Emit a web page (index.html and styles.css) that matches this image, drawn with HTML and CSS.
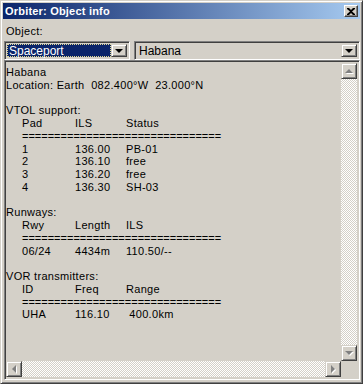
FILE: index.html
```html
<!DOCTYPE html>
<html lang="en">
<head>
    <meta charset="UTF-8">
    <title>Orbiter: Object info</title>
    <link rel="stylesheet" href="styles.css">
</head>
<body>
    <div class="window">
        <div class="title-bar">
            <span class="title-text">Orbiter: Object info</span>
            <button class="close-btn">
                <svg width="8" height="7" viewBox="0 0 8 7"><path d="M0 0h2l2 2 2-2h2v1L5 3.5 8 6v1H6L4 5 2 7H0V6l3-2.5L0 1z" fill="#000"/></svg>
            </button>
        </div>

        <div class="label">Object:</div>

        <div class="combo-row">
            <div class="combo combo-type">
                <div class="combo-value selected"><span>Spaceport</span></div>
                <div class="combo-btn"><span class="arrow-down"></span></div>
            </div>
            <div class="combo combo-name">
                <div class="combo-value">Habana</div>
                <div class="combo-btn"><span class="arrow-down"></span></div>
            </div>
        </div>

        <div class="info-box">
            <div class="info-main">
                <div class="info-text">
                    <div class="line">Habana</div>
                    <div class="line">Location: Earth&nbsp; 082.400°W&nbsp; 23.000°N</div>
                    <div class="line"></div>
                    <div class="line">VTOL support:</div>
                    <div class="row"><span>Pad</span><span>ILS</span><span>Status</span></div>
                    <div class="row rule">===============================</div>
                    <div class="row"><span>1</span><span>136.00</span><span>PB-01</span></div>
                    <div class="row"><span>2</span><span>136.10</span><span>free</span></div>
                    <div class="row"><span>3</span><span>136.20</span><span>free</span></div>
                    <div class="row"><span>4</span><span>136.30</span><span>SH-03</span></div>
                    <div class="line"></div>
                    <div class="line">Runways:</div>
                    <div class="row"><span>Rwy</span><span>Length</span><span>ILS</span></div>
                    <div class="row rule">===============================</div>
                    <div class="row"><span>06/24</span><span>4434m</span><span>110.50/--</span></div>
                    <div class="line"></div>
                    <div class="line">VOR transmitters:</div>
                    <div class="row"><span>ID</span><span>Freq</span><span>Range</span></div>
                    <div class="row rule">===============================</div>
                    <div class="row"><span>UHA</span><span>116.10</span><span>&nbsp;400.0km</span></div>
                </div>
                <div class="vscroll">
                    <div class="sb-btn"><span class="tri tri-up"></span></div>
                    <div class="sb-track"></div>
                    <div class="sb-btn"><span class="tri tri-down"></span></div>
                </div>
            </div>
            <div class="hscroll">
                <div class="sb-btn"><span class="tri tri-left"></span></div>
                <div class="sb-track"></div>
                <div class="sb-btn"><span class="tri tri-right"></span></div>
                <div class="sb-corner"></div>
            </div>
        </div>
    </div>
</body>
</html>
```

FILE: styles.css
```css
body {
    margin: 0;
    padding: 0;
    background: #d4d0c8;
    font-family: 'Liberation Sans', Arial, sans-serif;
    font-size: 11px;
    color: #000;
}

.window {
    width: 363px;
    height: 384px;
    box-sizing: border-box;
    border: 1px solid;
    border-color: #d4d0c8 #404040 #404040 #d4d0c8;
    box-shadow: inset 1px 1px #fff, inset -1px -1px #808080;
    padding: 2px;
    display: flex;
    flex-direction: column;
    background: #d4d0c8;
}

.title-bar {
    height: 16px;
    flex-shrink: 0;
    display: flex;
    align-items: center;
    justify-content: space-between;
    padding: 0 2px 0 2px;
    background: linear-gradient(90deg, #0a246a, #a6caf0);
}

.title-text {
    color: #fff;
    font-weight: bold;
    font-size: 11px;
    letter-spacing: 0.2px;
}

.close-btn {
    width: 14px;
    height: 12px;
    padding: 0;
    margin: 0;
    display: flex;
    align-items: center;
    justify-content: center;
    background: #d4d0c8;
    border: 1px solid;
    border-color: #fff #404040 #404040 #fff;
    box-shadow: inset -1px -1px #808080;
}

.label {
    padding: 6px 0 0 3px;
    height: 15px;
    flex-shrink: 0;
    letter-spacing: 0.3px;
}

.combo-row {
    display: flex;
    flex-shrink: 0;
    gap: 4px;
    padding: 1px 0 0 1px;
    height: 19px;
}

.combo {
    display: flex;
    box-sizing: border-box;
    height: 19px;
    border: 1px solid;
    border-color: #808080 #fff #fff #808080;
    box-shadow: inset 1px 1px #404040, inset -1px -1px #d4d0c8;
    padding: 2px;
    background: #d4d0c8;
}

.combo-type {
    width: 126px;
}

.combo-name {
    flex: 1;
}

.combo-value {
    flex: 1;
    display: flex;
    align-items: center;
    padding-left: 2px;
    font-size: 12px;
}

.combo-value.selected {
    background: #0a246a;
    color: #fff;
    outline: 1px dotted #e0d890;
    outline-offset: -1px;
}

.combo-btn {
    width: 16px;
    box-sizing: border-box;
    border: 1px solid;
    border-color: #d4d0c8 #404040 #404040 #d4d0c8;
    box-shadow: inset 1px 1px #fff, inset -1px -1px #808080;
    display: flex;
    align-items: center;
    justify-content: center;
}

.arrow-down {
    width: 0;
    height: 0;
    border-left: 4px solid transparent;
    border-right: 4px solid transparent;
    border-top: 4px solid #000;
    margin-top: 1px;
}

.info-box {
    flex: 1;
    min-height: 0;
    margin: 0 0 1px 1px;
    display: flex;
    flex-direction: column;
    box-sizing: border-box;
    border: 1px solid;
    border-color: #808080 #fff #fff #808080;
    box-shadow: inset 1px 1px #404040, inset -1px -1px #d4d0c8;
    padding: 2px 2px 2px 1px;
}

.info-main {
    flex: 1;
    display: flex;
    min-height: 0;
}

.info-text {
    flex: 1;
    padding: 3px 0 0 0;
    line-height: 12.75px;
    letter-spacing: 0.3px;
}

.line {
    height: 12.75px;
}

.row {
    display: flex;
    height: 12.75px;
    padding-left: 16px;
}

.row span:nth-child(1) {
    width: 53px;
}

.row span:nth-child(2) {
    width: 51px;
}

.rule {
    letter-spacing: 0;
}

.vscroll {
    width: 16px;
    display: flex;
    flex-direction: column;
}

.hscroll {
    height: 16px;
    flex-shrink: 0;
    display: flex;
}

.sb-track {
    flex: 1;
    background: repeating-conic-gradient(#fff 0 25%, #d4d0c8 0 50%) 0 0 / 2px 2px;
}

.sb-btn {
    width: 16px;
    height: 16px;
    flex-shrink: 0;
    box-sizing: border-box;
    border: 1px solid;
    border-color: #d4d0c8 #404040 #404040 #d4d0c8;
    box-shadow: inset 1px 1px #fff, inset -1px -1px #808080;
    background: #d4d0c8;
    display: flex;
    align-items: center;
    justify-content: center;
}

.sb-corner {
    width: 16px;
    background: #d4d0c8;
}

.tri {
    width: 0;
    height: 0;
}

.tri-up {
    border-left: 4px solid transparent;
    border-right: 4px solid transparent;
    border-bottom: 4px solid #808080;
    filter: drop-shadow(1px 1px 0 #fff);
}

.tri-down {
    border-left: 4px solid transparent;
    border-right: 4px solid transparent;
    border-top: 4px solid #808080;
    filter: drop-shadow(1px 1px 0 #fff);
}

.tri-left {
    border-top: 4px solid transparent;
    border-bottom: 4px solid transparent;
    border-right: 4px solid #808080;
    filter: drop-shadow(1px 1px 0 #fff);
}

.tri-right {
    border-top: 4px solid transparent;
    border-bottom: 4px solid transparent;
    border-left: 4px solid #808080;
    filter: drop-shadow(1px 1px 0 #fff);
}
```
